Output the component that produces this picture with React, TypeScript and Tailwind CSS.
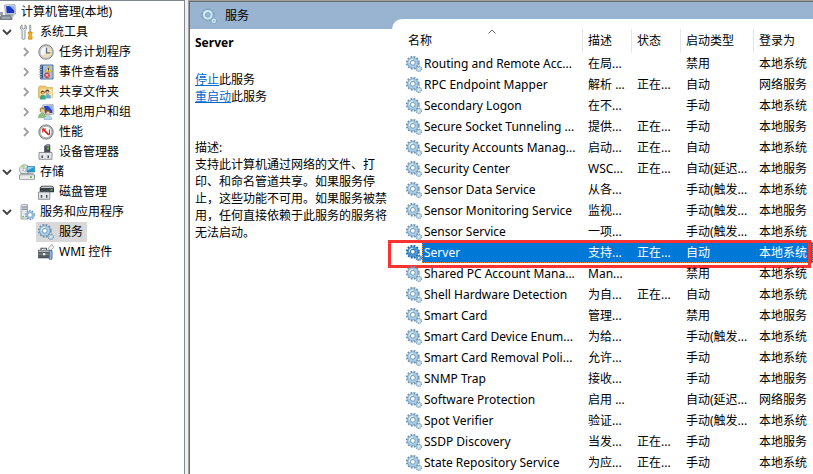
import { useState } from 'react';
import type { ReactNode } from 'react';
import clsx from 'clsx';

type TreeNode = {
  label: string;
  icon: ReactNode;
  open?: boolean;
  selected?: boolean;
  hasChildren?: boolean;
  children?: TreeNode[];
};

type Service = {
  name: string;
  description: string;
  status: string;
  startup: string;
  logon: string;
};

function Icon({ children }: { children: ReactNode }) {
  return (
    <svg viewBox="0 0 16 16" className="h-4 w-4 shrink-0" aria-hidden="true">
      {children}
    </svg>
  );
}

function GearsIcon({ light, selected }: { light?: boolean; selected?: boolean }) {
  const edge = selected ? '#1463ad' : light ? '#7fa3bd' : '#6d92b0';
  const body = selected ? '#4f9ad8' : light ? '#c9e6f4' : '#a9cfe8';
  return (
    <Icon>
      <circle cx="6.8" cy="6.8" r="6" fill="none" stroke={edge} strokeWidth="1.8" strokeDasharray="1.9 1.24" />
      <circle cx="6.8" cy="6.8" r="5.4" fill={edge} />
      <circle cx="6.8" cy="6.8" r="4.900" fill={body} />
      <path d="M3.400 6.800a3.400 3.400 0 0 1 3.400-3.400" fill="none" stroke="#e6f5fc" strokeWidth="1.2" />
      <circle cx="6.8" cy="6.8" r="2.4" fill={light ? '#99b4d1' : '#ffffff'} stroke={edge} strokeWidth="0.9" />
      <circle cx="12.8" cy="12.8" r="2.5" fill="none" stroke={edge} strokeWidth="1.4" strokeDasharray="1.2 0.76" />
      <circle cx="12.8" cy="12.8" r="1.6" fill={light ? '#99b4d1' : '#ffffff'} stroke={body} strokeWidth="1.4" />
    </Icon>
  );
}

const computerIcon = (
  <Icon>
    <path d="M4.5 1 15 .6l.5 9.600-10 .5z" fill="#d7dbe2" stroke="#8b919c" strokeWidth=".7" />
    <path d="m6 2.200 8-.3.300 7-7.600.4z" fill="#1b35c9" />
    <path d="m9.500 2 4.500-.1.200 4.600z" fill="#8ab4f5" />
    <path d="M10 10.500h3l1 2H9z" fill="#9fa5ad" />
    <path d="M0 8h3v3H0z" fill="#9ba1aa" />
    <path d="M1 11.500h9l2 2v2.200H0v-3z" fill="#7c8792" stroke="#515b65" strokeWidth=".6" />
    <path d="M3 12.800v2M5 12.800v2M7 12.800v2M9 12.800v2" stroke="#dce3e8" strokeWidth=".8" />
  </Icon>
);

const toolsIcon = (
  <Icon>
    <path
      d="M3 .8v3.400l1.500.8L6 4.200V.8c1.200.8 1.700 2 1.500 3.300C7.300 5.200 6.700 6 6 6.500v7.700c0 1.600-3 1.600-3 0V6.500C2.200 6 1.600 5.200 1.500 4.100 1.400 2.800 1.900 1.600 3 .8z"
      fill="#eceeef"
      stroke="#75797d"
      strokeWidth=".8"
    />
    <path d="M10.600 1h1.200v6.500h-1.200z" fill="#c4c7ca" stroke="#7b7f83" strokeWidth=".5" />
    <path d="M9.300 8h3.800v2l-.8.800v1.200l.8.800v2.400H9.300v-2.400l.8-.8v-1.200l-.8-.8z" fill="#f4ad18" stroke="#bd7c0e" strokeWidth=".6" />
  </Icon>
);

const clockIcon = (
  <Icon>
    <circle cx="8" cy="8" r="7.200" fill="#d4d6d8" stroke="#7a7d80" strokeWidth="1" />
    <circle cx="8" cy="8" r="5.700" fill="#f5f7f8" stroke="#a5a9ac" strokeWidth=".5" />
    <path d="M8 8V2.500A5.500 5.500 0 1 1 4.100 11.900z" fill="#f2e0b4" />
    <path d="M8.500 3.800v5h3.700" fill="none" stroke="#5c6f86" strokeWidth="1.300" />
  </Icon>
);

const eventIcon = (
  <Icon>
    <path d="M2.500 1h12.500v14H2.500z" fill="#bccde2" stroke="#3f5f8c" strokeWidth=".9" />
    <path d="M3 1.500h2.200v13H3z" fill="#2f5790" />
    <path d="M1 3h3M1 5.500h3M1 8h3M1 10.500h3M1 13h3" stroke="#a5abb3" strokeWidth="1" />
    <path d="M6 3h8M6 5h8M6 7h8M6 9h8M6 11h8M6 13h8" stroke="#8fa9c9" strokeWidth=".7" />
    <path d="m10.500 2.500 3.200 5.500H7.300z" fill="#ffe04a" stroke="#b39218" strokeWidth=".6" />
    <path d="M10.500 4.200v2M10.500 6.700v.7" stroke="#222" strokeWidth=".9" />
    <circle cx="9" cy="11.300" r="2.600" fill="#e04a46" stroke="#a72d2a" strokeWidth=".4" />
    <path d="m8 10.300 2 2m0-2-2 2" stroke="#fff" strokeWidth=".9" />
  </Icon>
);

const sharedFolderIcon = (
  <Icon>
    <path d="M.500 3.200v10.300H14.500V3.500H8.500L7.500 2H1.500z" fill="#edc76b" stroke="#cba04c" strokeWidth=".6" />
    <path d="M2.500 4.800h12v8.700h-12z" fill="#f8e2a4" />
    <circle cx="4.800" cy="8.300" r="1.900" fill="#5f4630" />
    <circle cx="5" cy="9.100" r="1.300" fill="#e0b48c" />
    <circle cx="9.300" cy="7.500" r="1.900" fill="#4d3826" />
    <circle cx="9.500" cy="8.300" r="1.300" fill="#e0b48c" />
    <path d="M1.800 14.500c0-5 6-5 6 0v1h-6z" fill="#46a580" />
    <path d="M6.800 13.600c0-4.800 6-4.800 6 0v.8h-6z" fill="#6ba9d2" />
  </Icon>
);

const usersIcon = (
  <Icon>
    <path d="m4.500.900 10.700-.4.300 9.800-10 .4z" fill="#d4d9e2" stroke="#8990a0" strokeWidth=".6" />
    <path d="m6 2 8.100-.3.300 7.200-7.500.3z" fill="#2444cf" />
    <path d="m10 1.900 4.100-.2.200 4.900z" fill="#89b1f3" />
    <circle cx="4.300" cy="6" r="2.700" fill="#a98a52" />
    <circle cx="4.700" cy="6.900" r="1.900" fill="#e8c6a0" />
    <path d="M.500 12.800c0-4.800 7-4.800 7 0v1h-7z" fill="#8fbf7c" stroke="#5d9550" strokeWidth=".4" />
    <circle cx="9.800" cy="8.300" r="2.500" fill="#7b5c39" />
    <circle cx="10" cy="9.200" r="1.800" fill="#e8c6a0" />
    <path d="M6.200 15c0-4.800 7.600-4.800 7.600 0v.7H6.200z" fill="#b7d6ee" stroke="#6f98b9" strokeWidth=".5" />
  </Icon>
);

const performanceIcon = (
  <Icon>
    <circle cx="8" cy="8" r="7.100" fill="#c9cbcd" stroke="#717477" strokeWidth="1" />
    <circle cx="8" cy="8" r="5.700" fill="#fff" stroke="#97999c" strokeWidth=".6" />
    <path d="m4.800 4.800 6 6" stroke="#dc1c1c" strokeWidth="1.700" />
    <path d="M4.800 8.500V5h3.200M11.500 5.500v5.300" fill="none" stroke="#dc1c1c" strokeWidth="1.100" />
  </Icon>
);

const deviceIcon = (
  <Icon>
    <path d="m6.500 2 2-1.300H12v8.500H6.500z" fill="#4b5056" stroke="#2f3338" strokeWidth=".5" />
    <path d="m6.800 2.200 1.700-1h3.200v1z" fill="#a5a9ad" />
    <path d="M9.200 3.500h1.800v1.800H9.200z" fill="#62cf43" />
    <path d="M1 8.500h13v6.800H1z" fill="#e4e5e7" stroke="#7b7f83" strokeWidth=".8" />
    <path d="M3.500 11.500H5V14H3.500zM9.500 11.500H11V14H9.500z" fill="#4c5158" />
  </Icon>
);

const storageIcon = (
  <Icon>
    <circle cx="5.500" cy="5.800" r="5.100" fill="#dfe4e4" stroke="#8d979b" strokeWidth=".8" />
    <path d="M5.500 5.800 2 2.300A5 5 0 0 1 5.500.800z" fill="#a7d987" />
    <circle cx="5.500" cy="5.800" r="1.500" fill="#fff" stroke="#858c90" strokeWidth=".6" />
    <path d="M8 2.500h7.700v5.500H8z" fill="#299bd1" stroke="#287298" strokeWidth=".6" />
    <path d="M8.400 3h6.800L8.400 6.500z" fill="#8fd5f4" />
    <path d="m.500 11 1.500-1.300h12l1.500 1.300v4.300H.500z" fill="#b4b8bc" stroke="#65696e" strokeWidth=".6" />
    <path d="M1 11.300h14V15H1z" fill="#e6e8ea" />
    <path d="M11 12.300h2V14h-2z" fill="#58c43c" />
  </Icon>
);

const diskIcon = (
  <Icon>
    <path d="M2 4 3.500 2h11L16 4v4H2z" fill="#3d4248" stroke="#272b30" strokeWidth=".5" />
    <path d="M3.800 2.500h10.500l1 1.500H2.800z" fill="#c3c7cb" />
    <path d="M12.500 5.200h2V6.700h-2z" fill="#63d247" />
    <path d="M.500 8h11.300v7.300H.500z" fill="#e2e4e5" stroke="#777c81" strokeWidth=".8" />
    <path d="M2.800 11h1.400v2.800H2.800zM8 11h1.400v2.800H8z" fill="#454b51" />
  </Icon>
);

const serverIcon = (
  <Icon>
    <path d="M2 1.200 3.500.400H8.500V15H2z" fill="#e3e7e9" stroke="#89949b" strokeWidth=".8" />
    <path d="M3 3h5M3 5.200h5" stroke="#66747d" strokeWidth="1" />
    <path d="M3.300 12H4.800v1.500H3.300z" fill="#61ba46" />
    <circle cx="11" cy="11" r="4.200" fill="none" stroke="#6690b1" strokeWidth="1.500" strokeDasharray="1.500 1.140" />
    <circle cx="11" cy="11" r="2.800" fill="#fff" stroke="#8db7d4" strokeWidth="2" />
  </Icon>
);

const wmiIcon = (
  <Icon>
    <path d="M3 6V4.300h5.500V6" fill="none" stroke="#50565c" strokeWidth="1.100" />
    <path d="M.300 6.200h12l1.500 1.300v6.500H.300z" fill="#545b61" stroke="#3e4449" strokeWidth=".6" />
    <path d="M.800 6.500h10l1.500 1.500H.800z" fill="#aeb4b8" />
    <path d="M.800 9.700h10v.9H.800z" fill="#9ba2a7" />
    <path d="M5 9h2.300v2.300H5z" fill="#e7e8e9" />
    <path d="M14.200.500 11.500 2.500l-1.300 2.400 2.500 1.600 2.900-3.100z" fill="#f0f2f3" stroke="#73797e" strokeWidth=".6" />
    <path d="M11.300 6.500h2.700v8.800h-2.700z" fill="#8bb8e0" stroke="#34648f" strokeWidth=".7" />
  </Icon>
);

const tree: TreeNode[] = [
  {
    label: '系统工具',
    icon: toolsIcon,
    open: true,
    children: [
      { label: '任务计划程序', icon: clockIcon, hasChildren: true },
      { label: '事件查看器', icon: eventIcon, hasChildren: true },
      { label: '共享文件夹', icon: sharedFolderIcon, hasChildren: true },
      { label: '本地用户和组', icon: usersIcon, hasChildren: true },
      { label: '性能', icon: performanceIcon, hasChildren: true },
      { label: '设备管理器', icon: deviceIcon },
    ],
  },
  {
    label: '存储',
    icon: storageIcon,
    open: true,
    children: [{ label: '磁盘管理', icon: diskIcon }],
  },
  {
    label: '服务和应用程序',
    icon: serverIcon,
    open: true,
    children: [
      { label: '服务', icon: <GearsIcon />, selected: true },
      { label: 'WMI 控件', icon: wmiIcon },
    ],
  },
];

const services: Service[] = [
  { name: 'Routing and Remote Acc...', description: '在局...', status: '', startup: '禁用', logon: '本地系统' },
  { name: 'RPC Endpoint Mapper', description: '解析 ...', status: '正在...', startup: '自动', logon: '网络服务' },
  { name: 'Secondary Logon', description: '在不...', status: '', startup: '手动', logon: '本地系统' },
  { name: 'Secure Socket Tunneling ...', description: '提供...', status: '正在...', startup: '手动', logon: '本地服务' },
  { name: 'Security Accounts Manag...', description: '启动...', status: '正在...', startup: '自动', logon: '本地系统' },
  { name: 'Security Center', description: 'WSC...', status: '正在...', startup: '自动(延迟...', logon: '本地服务' },
  { name: 'Sensor Data Service', description: '从各...', status: '', startup: '手动(触发...', logon: '本地系统' },
  { name: 'Sensor Monitoring Service', description: '监视...', status: '', startup: '手动(触发...', logon: '本地服务' },
  { name: 'Sensor Service', description: '一项...', status: '', startup: '手动(触发...', logon: '本地系统' },
  { name: 'Server', description: '支持...', status: '正在...', startup: '自动', logon: '本地系统' },
  { name: 'Shared PC Account Mana...', description: 'Man...', status: '', startup: '禁用', logon: '本地系统' },
  { name: 'Shell Hardware Detection', description: '为自...', status: '正在...', startup: '自动', logon: '本地系统' },
  { name: 'Smart Card', description: '管理...', status: '', startup: '禁用', logon: '本地服务' },
  { name: 'Smart Card Device Enum...', description: '为给...', status: '', startup: '手动(触发...', logon: '本地系统' },
  { name: 'Smart Card Removal Poli...', description: '允许...', status: '', startup: '手动', logon: '本地系统' },
  { name: 'SNMP Trap', description: '接收...', status: '', startup: '手动', logon: '本地服务' },
  { name: 'Software Protection', description: '启用 ...', status: '', startup: '自动(延迟...', logon: '网络服务' },
  { name: 'Spot Verifier', description: '验证...', status: '', startup: '手动(触发...', logon: '本地系统' },
  { name: 'SSDP Discovery', description: '当发...', status: '正在...', startup: '手动', logon: '本地服务' },
  { name: 'State Repository Service', description: '为应...', status: '正在...', startup: '手动', logon: '本地系统' },
];

function TreeItem({ node }: { node: TreeNode }) {
  const [open, setOpen] = useState(!!node.open);
  const expandable = node.hasChildren || !!node.children;

  return (
    <li>
      <div className="flex h-5 items-center">
        {expandable ? (
          <button
            type="button"
            aria-label={node.label}
            aria-expanded={open}
            onClick={() => setOpen(!open)}
            className="flex h-5 w-[14px] shrink-0 items-center justify-center"
          >
            <svg viewBox="0 0 10 10" className="h-[10px] w-[10px]" fill="none" aria-hidden="true">
              {open ? (
                <path d="m1 3 4 4 4-4" stroke="#404040" strokeWidth="1.8" />
              ) : (
                <path d="m3 1 4 4-4 4" stroke="#a0a0a0" strokeWidth="1.8" />
              )}
            </svg>
          </button>
        ) : (
          <span className="w-[14px] shrink-0" />
        )}
        <div className={clsx('ml-[3px] flex h-5 items-center gap-[5px] pl-0.5 pr-1', node.selected && 'bg-[#d9d9d9]')}>
          {node.icon}
          <span>{node.label}</span>
        </div>
      </div>
      {open && node.children && (
        <ul className="pl-[19px]">
          {node.children.map((child) => (
            <TreeItem key={child.label} node={child} />
          ))}
        </ul>
      )}
    </li>
  );
}

export default function App() {
  const [selected, setSelected] = useState('Server');

  return (
    <div className="flex min-h-screen overflow-hidden whitespace-nowrap bg-[#f0f0f0] font-['Noto_Sans','Noto_Sans_CJK_SC',sans-serif] text-xs text-black">
      <nav className="w-[185px] shrink-0 border-r border-t border-[#828790] bg-white">
        <div className="flex h-[21px] items-center gap-[5px]">
          {computerIcon}
          <span>计算机管理(本地)</span>
        </div>
        <ul>
          {tree.map((node) => (
            <TreeItem key={node.label} node={node} />
          ))}
        </ul>
      </nav>

      <main className="ml-[3px] flex min-w-0 flex-1 border-l border-t border-[#a0a0a0]">
        <div className="flex min-w-0 flex-1 border-l border-t border-[#696969]">
          <section className="w-[202px] shrink-0 bg-white">
            <header className="flex h-[27px] items-center gap-2 bg-[#99b4d1] pl-[11px]">
              <GearsIcon light />
              <h1>服务</h1>
            </header>
            <div className="whitespace-normal px-[5px] pt-[5px] leading-[17px]">
              <h2 className="font-bold">{selected}</h2>
              <div className="mt-5">
                <p>
                  <a href="#stop" className="text-[#0066cc] underline">停止</a>此服务
                </p>
                <p>
                  <a href="#restart" className="text-[#0066cc] underline">重启动</a>此服务
                </p>
              </div>
              <div className="mt-[34px]">
                <p>描述:</p>
                <p>
                  支持此计算机通过网络的文件、打印、和命名管道共享。如果服务停止，这些功能不可用。如果服务被禁用，任何直接依赖于此服务的服务将无法启动。
                </p>
              </div>
            </div>
          </section>

          <section className="min-w-0 flex-1 bg-[#99b4d1] pt-[17px]">
            <div className="h-full rounded-tl-[10px] bg-white">
              <table className="w-full table-fixed border-collapse text-left">
                <colgroup>
                  <col className="w-[30px]" />
                  <col className="w-[160px]" />
                  <col className="w-[49px]" />
                  <col className="w-[49px]" />
                  <col className="w-[73px]" />
                  <col />
                </colgroup>
                <thead>
                  <tr className="h-[34px]">
                    <th colSpan={2} className="relative p-0 pl-4 pt-2.5 font-normal">
                      名称
                      <svg viewBox="0 0 8 5" className="absolute left-24 top-[10px] h-[5px] w-2" fill="none" aria-hidden="true">
                        <path d="M.5 4.500 4 1l3.500 3.500" stroke="#606060" />
                      </svg>
                    </th>
                    {['描述', '状态', '启动类型', '登录为'].map((title) => (
                      <th key={title} className="p-0 pt-2.5 font-normal">
                        <span className="flex h-6 items-center border-l border-[#e5e5e5] pl-[5px]">{title}</span>
                      </th>
                    ))}
                  </tr>
                </thead>
                <tbody>
                  {services.map((service) => {
                    const active = service.name === selected;
                    const cell = clsx('p-0 pl-1.5', active && 'bg-[#0078d7] text-white');
                    return (
                      <tr key={service.name} className="relative h-[21px]" onClick={() => setSelected(service.name)}>
                        <td className="p-0 pl-[14px]">
                          <GearsIcon selected={active} />
                          {active && (
                            <>
                              <span className="pointer-events-none absolute inset-y-0 left-[30px] right-0 border border-dotted border-[#ff8728]" />
                              <span className="pointer-events-none absolute -left-1 -top-0.5 right-0.5 h-7 border-[3px] border-[#f93232]" />
                            </>
                          )}
                        </td>
                        <td className={clsx('p-0 pl-0.5', active && 'bg-[#0078d7] text-white')}>{service.name}</td>
                        <td className={cell}>{service.description}</td>
                        <td className={cell}>{service.status}</td>
                        <td className={cell}>{service.startup}</td>
                        <td className={cell}>{service.logon}</td>
                      </tr>
                    );
                  })}
                </tbody>
              </table>
            </div>
          </section>
        </div>
      </main>
    </div>
  );
}
